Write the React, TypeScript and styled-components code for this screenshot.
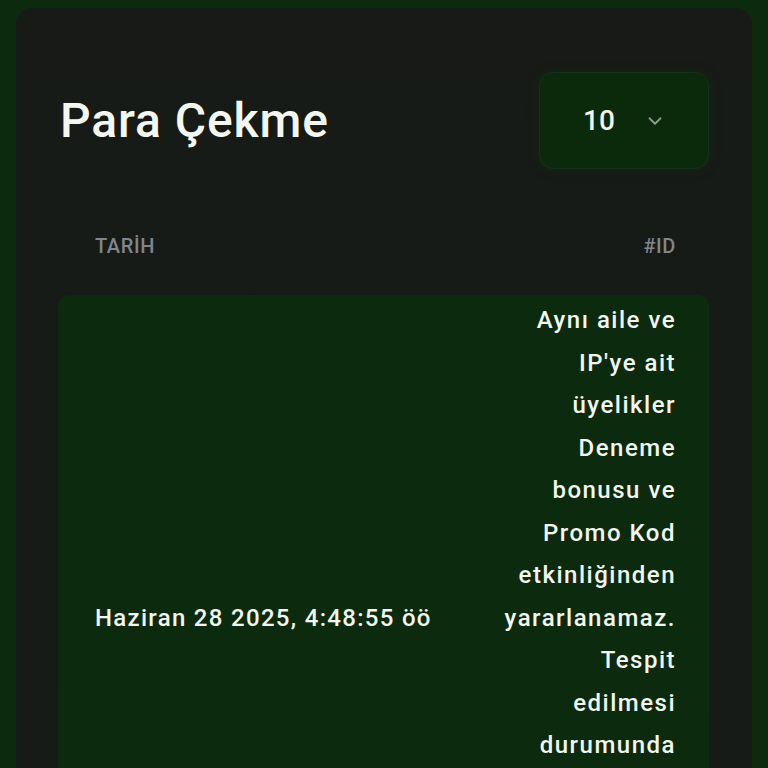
import React from "react";
import styled, { createGlobalStyle } from "styled-components";
import { ChevronDown } from "lucide-react";

const GlobalStyle = createGlobalStyle`
  html, body {
    margin: 0;
    padding: 0;
    background: #0c2a0d;
  }
  body {
    font-family: Roboto, "Noto Sans", "Liberation Sans", sans-serif;
    color: #f2f6ee;
  }
`;

const Page = styled.div`
  padding: 8px 16px 0;
  min-height: 768px;
  box-sizing: border-box;
`;

const Card = styled.section`
  background: linear-gradient(180deg, #171a16, #161b16);
  border-radius: 16px;
  padding: 64px 43px 0 44px;
  min-height: 900px;
  box-sizing: border-box;
`;

const Header = styled.header`
  display: flex;
  align-items: center;
  justify-content: space-between;
`;

const Title = styled.h1`
  margin: 0;
  font-size: 48px;
  font-weight: 500;
  letter-spacing: 0.9px;
  color: #f4f7f0;
`;

const Select = styled.button`
  width: 170px;
  height: 97px;
  box-sizing: border-box;
  display: flex;
  align-items: center;
  justify-content: space-between;
  padding: 0 42px 0 43px;
  background: #0b2a0c;
  border: 1px solid #12321a;
  border-radius: 14px;
  box-shadow: 0 0 12px rgba(20, 60, 20, 0.35);
  color: #f2f6ee;
  font-family: inherit;
  font-size: 28px;
  font-weight: 500;
  cursor: pointer;
`;

const Chevron = styled(ChevronDown)`
  color: #8e9a90;
`;

const Table = styled.table`
  width: calc(100% + 2px);
  margin: 28px 0 0 -2px;
  border-collapse: separate;
  border-spacing: 0 21px;
`;

const Th = styled.th<{ $align: "left" | "right" }>`
  text-align: ${(p) => p.$align};
  padding: 14px 33px 14px 37px;
  font-size: 20px;
  font-weight: 500;
  letter-spacing: 0.6px;
  line-height: 28px;
  color: #80868f;
  text-transform: uppercase;
`;

const Row = styled.tr`
  background: #0c2a0d;
`;

const DateCell = styled.td`
  padding: 4px 20px 0 37px;
  font-size: 24px;
  font-weight: 500;
  letter-spacing: 1.3px;
  color: #f2f6ee;
  white-space: nowrap;
  vertical-align: middle;
  border-radius: 10px 0 0 10px;
`;

const NoteCell = styled.td`
  padding: 4px 33px 0 0;
  width: 180px;
  font-size: 24px;
  font-weight: 500;
  letter-spacing: 1.5px;
  line-height: 42.5px;
  text-align: right;
  white-space: pre-line;
  color: #f2f6ee;
  border-radius: 0 10px 10px 0;
`;

const note = [
  "Aynı aile ve",
  "IP'ye ait",
  "üyelikler",
  "Deneme",
  "bonusu ve",
  "Promo Kod",
  "etkinliğinden",
  "yararlanamaz.",
  "Tespit",
  "edilmesi",
  "durumunda",
  "bonus ve",
  "kazançlarınız",
  "iptal",
  "edilecektir.",
].join("\n");

const App: React.FC = () => {
  return (
    <>
      <GlobalStyle />
      <Page>
        <Card>
          <Header>
            <Title>Para Çekme</Title>
            <Select>
              10
              <Chevron size={22} strokeWidth={2} />
            </Select>
          </Header>
          <Table>
            <thead>
              <tr>
                <Th $align="left">Tarİh</Th>
                <Th $align="right">#ID</Th>
              </tr>
            </thead>
            <tbody>
              <Row>
                <DateCell>Haziran 28 2025, 4:48:55 öö</DateCell>
                <NoteCell>{note}</NoteCell>
              </Row>
            </tbody>
          </Table>
        </Card>
      </Page>
    </>
  );
};

export default App;
